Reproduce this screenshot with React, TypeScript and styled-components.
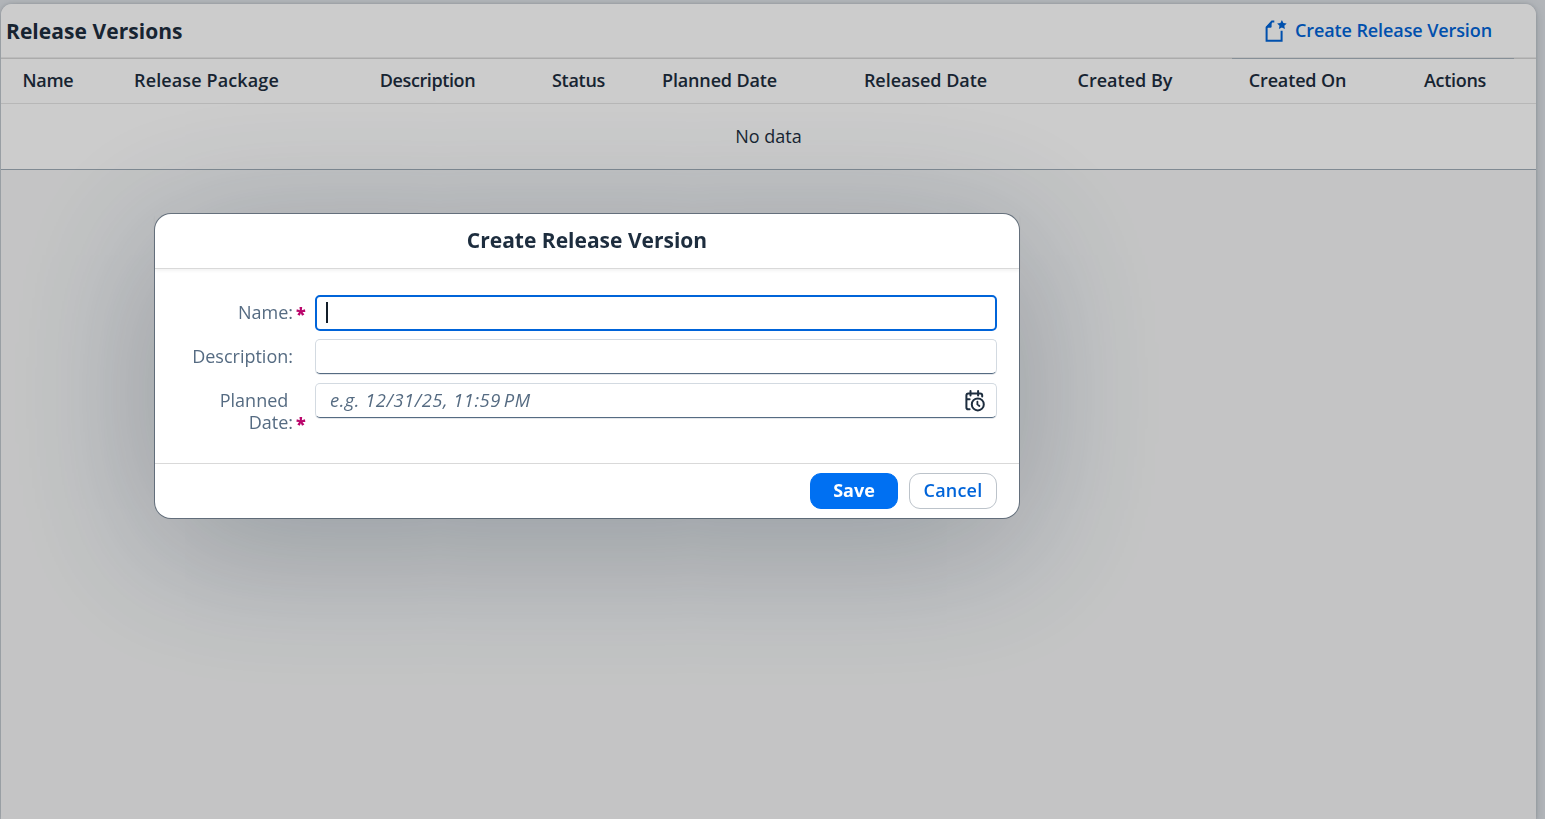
import React from 'react';
import styled, { createGlobalStyle } from 'styled-components';

const GlobalStyle = createGlobalStyle`
  * { box-sizing: border-box; }
  html, body, #root { height: 100%; }
  body {
    margin: 0;
    overflow: hidden;
    background: #dfe3e8;
    color: #1d2d3e;
    font-family: "Open Sans", "Noto Sans", sans-serif;
    font-size: 18px;
    line-height: 22px;
  }
`;

const Page = styled.div`
  height: 100%;
  padding: 4px 9px 0 1px;
`;

const Panel = styled.section`
  height: 100%;
  display: flex;
  flex-direction: column;
  background: #f5f6f7;
  border-radius: 11px 11px 0 0;
  box-shadow: 0 0 3px rgba(34, 53, 72, 0.2), 0 3px 11px rgba(34, 53, 72, 0.2);
`;

const Toolbar = styled.header`
  flex: none;
  height: 55px;
  display: flex;
  align-items: stretch;
  justify-content: space-between;
  padding: 0 22px 0 5px;
  background: #fff;
  border-bottom: 1px solid #d6d6d6;
  box-shadow: inset 0 -1px 0 #ececec;
  border-radius: 11px 11px 0 0;
`;

const PageTitle = styled.h1`
  margin: 0;
  font-size: 21px;
  font-weight: 700;
  line-height: 54px;
  letter-spacing: 0.05px;
`;

const ActionArea = styled.div`
  width: 282px;
  margin-bottom: -1px;
  padding-left: 10px;
  display: flex;
  justify-content: center;
  border-bottom: 1px solid #a8b3bd;
`;

const LinkButton = styled.button`
  display: flex;
  align-items: center;
  gap: 7px;
  padding: 0;
  border: 0;
  background: none;
  color: #0064d9;
  font: 600 18px/22px "Open Sans", "Noto Sans", sans-serif;
  letter-spacing: -0.1px;
`;

const LinkText = styled.span`
  padding-bottom: 2px;
`;

const HeaderRow = styled.div`
  flex: none;
  height: 45px;
  display: grid;
  grid-template-columns: 94px 223px 219px 83px 199px 213px 186px 159px 156px;
  align-items: center;
  padding-bottom: 2px;
  background: #fff;
  border-bottom: 1px solid #e5e5e5;
`;

const HeaderCell = styled.span<{ $track?: number }>`
  text-align: center;
  font-weight: 600;
  letter-spacing: ${p => p.$track ?? 0}px;
`;

const EmptyRow = styled.div`
  flex: none;
  height: 66px;
  line-height: 65px;
  text-align: center;
  background: #fff;
  border-bottom: 1px solid #a0adb8;
`;

const Overlay = styled.div`
  position: fixed;
  inset: 0;
  background: rgba(0, 0, 0, 0.2);
`;

const Dialog = styled.div`
  position: absolute;
  left: 155px;
  top: 214px;
  width: 864px;
  height: 304px;
  display: flex;
  flex-direction: column;
  background: #fff;
  border-radius: 16px;
  box-shadow: 0 0 0 1px rgba(34, 53, 72, 0.55), 0 27px 150px rgba(34, 53, 72, 0.32);
`;

const DialogHeader = styled.h2`
  flex: none;
  height: 55px;
  margin: 0;
  text-align: center;
  font-size: 21px;
  font-weight: 700;
  line-height: 53px;
  border-bottom: 1px solid #d9d9d9;
  box-shadow: 0 2px 3px rgba(0, 0, 0, 0.05);
`;

const Form = styled.div`
  flex: 1;
  display: grid;
  grid-template-columns: 150px 682px;
  grid-auto-rows: 36px;
  column-gap: 10px;
  row-gap: 8px;
  padding-top: 26px;
`;

const Label = styled.label<{ $required?: boolean }>`
  display: flex;
  justify-content: flex-end;
  align-items: flex-end;
  height: max-content;
  padding-top: 6px;
  padding-right: ${p => (p.$required ? 0 : 12)}px;
  color: #556b82;
  text-align: right;
  white-space: pre;
`;

const Asterisk = styled.span`
  width: 12px;
  height: 21px;
  padding-left: 3px;
  color: #ba066c;
  font-size: 18px;
  font-weight: 800;
  text-align: left;
`;

const Field = styled.div<{ $focused?: boolean }>`
  display: flex;
  align-items: center;
  justify-content: space-between;
  border: ${p => (p.$focused ? '2px solid #0064d9' : '1px solid #d3dae1')};
  border-bottom-color: ${p => (p.$focused ? '#0064d9' : '#556b82')};
  border-radius: 5px;
  height: ${p => (p.$focused ? 36 : 35)}px;
  padding: 0 10px 0 ${p => (p.$focused ? 9 : 14)}px;
  box-shadow: ${p => (p.$focused ? 'none' : '0 1px 0 rgba(85, 107, 130, 0.16)')};
`;

const Caret = styled.span`
  width: 2px;
  height: 21px;
  margin-bottom: 1px;
  background: #131e29;
`;

const Placeholder = styled.span`
  padding-bottom: 1px;
  color: #556b82;
  font-size: 18.4px;
  font-style: italic;
  letter-spacing: 0.5px;
`;

const Footer = styled.footer`
  flex: none;
  height: 55px;
  display: flex;
  align-items: center;
  justify-content: flex-end;
  gap: 11px;
  padding-right: 22px;
  border-top: 1px solid #d9d9d9;
`;

const Button = styled.button<{ $primary?: boolean }>`
  width: 88px;
  height: 36px;
  padding: 0 0 2px;
  border: 1px solid ${p => (p.$primary ? '#0070f2' : '#bcc3ca')};
  border-radius: 11px;
  background: ${p => (p.$primary ? '#0070f2' : '#fff')};
  color: ${p => (p.$primary ? '#fff' : '#0064d9')};
  font: ${p => (p.$primary ? 700 : 600)} 18px/22px "Open Sans", "Noto Sans", sans-serif;
  letter-spacing: ${p => (p.$primary ? 0 : 0.2)}px;
`;

const NewDocumentIcon = () => (
  <svg width="24" height="24" viewBox="0 0 24 24" fill="none">
    <path d="M10.3 2.4H8L2.6 8.3V21.7H17.6V11.8" stroke="currentColor" strokeWidth="2" />
    <path d="M2 8.7V8L7.6 2V7.5Q7.6 8.7 6.4 8.7Z" fill="currentColor" />
    <path d="m17.9 .9 1.5 3 3.3.5-2.4 2.3.6 3.3-3-1.5-3 1.5.6-3.3-2.4-2.3 3.3-.5Z" fill="currentColor" />
  </svg>
);

const DateTimeIcon = () => (
  <svg width="22" height="24" viewBox="0 0 22 24" fill="none" stroke="#1d2d3e" strokeWidth="2" strokeLinecap="round" strokeLinejoin="round">
    <path d="M5.6 20.2H4.2Q2.4 20.2 2.4 18.4V6.6Q2.4 4.6 4.4 4.6H16.2Q18.2 4.6 18.2 6.6V7.6" />
    <path d="M6.5 1.9V6.4M14.1 1.9V6.4M3 10.2H5.6" />
    <circle cx="13.8" cy="15.4" r="6" />
    <path d="M13.4 12.6V15.4L15.4 17" strokeWidth="1.8" />
  </svg>
);

const columns: [string, number][] = [
  ['Name', -0.3],
  ['Release Package', 0.12],
  ['Description', -0.4],
  ['Status', -0.3],
  ['Planned Date', -0.15],
  ['Released Date', -0.05],
  ['Created By', 0],
  ['Created On', -0.15],
  ['Actions', -0.3],
];

export default function App() {
  return (
    <>
      <GlobalStyle />
      <Page>
        <Panel>
          <Toolbar>
            <PageTitle>Release Versions</PageTitle>
            <ActionArea>
              <LinkButton>
                <NewDocumentIcon />
                <LinkText>Create Release Version</LinkText>
              </LinkButton>
            </ActionArea>
          </Toolbar>
          <HeaderRow>
            {columns.map(([name, track]) => (
              <HeaderCell key={name} $track={track}>{name}</HeaderCell>
            ))}
          </HeaderRow>
          <EmptyRow>No data</EmptyRow>
        </Panel>
      </Page>
      <Overlay>
        <Dialog role="dialog">
          <DialogHeader>Create Release Version</DialogHeader>
          <Form>
            <Label $required>Name:<Asterisk>*</Asterisk></Label>
            <Field $focused><Caret /></Field>
            <Label>Description:</Label>
            <Field />
            <Label $required>{'Planned \nDate:'}<Asterisk>*</Asterisk></Label>
            <Field>
              <Placeholder>e.g. 12/31/25, 11:59{'\u202f'}PM</Placeholder>
              <DateTimeIcon />
            </Field>
          </Form>
          <Footer>
            <Button $primary>Save</Button>
            <Button>Cancel</Button>
          </Footer>
        </Dialog>
      </Overlay>
    </>
  );
}
